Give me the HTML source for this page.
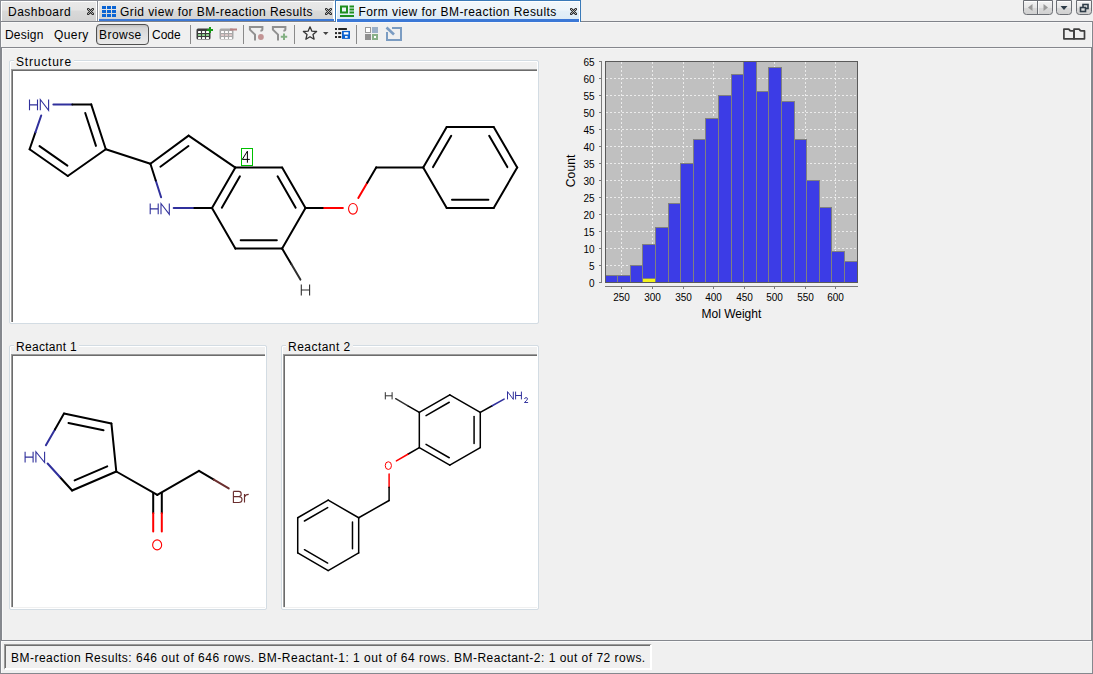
<!DOCTYPE html>
<html><head><meta charset="utf-8">
<style>
*{box-sizing:border-box;margin:0;padding:0}
html,body{width:1093px;height:674px;overflow:hidden;background:#f0f0f0;font-family:"Liberation Sans",sans-serif;font-size:12px;color:#000}
.abs{position:absolute}
.tab{position:absolute;top:0;height:21px;border:1px solid #8a8d95;border-bottom:none;box-shadow:inset 1px 0 0 #fff, inset -1px 0 0 #fff;background:linear-gradient(#ffffff 0,#ffffff 1px,#e9e9e9 1px,#e5e5e5 9px,#d9d9d9 10px,#d3d3d3 19px);}
.tab .t{position:absolute;top:4px;white-space:nowrap;line-height:14px}
.tab .ul{position:absolute;left:1px;right:0;top:18px;height:2px;background:#3b78d6}
.x{position:absolute;top:7px;width:7px;height:7px}
.tb{position:absolute;top:29px;line-height:12px;white-space:nowrap}
.sep{position:absolute;top:25px;width:1px;height:19px;background:#8a8a8a}
.grp{position:absolute;border:1px solid #d3dce3;border-radius:2px;box-shadow:inset 0 0 0 1px #fff}
.gt{position:absolute;background:#f0f0f0;padding:0 2px;line-height:14px;white-space:nowrap}
.pnl{position:absolute;background:#fff;border-top:1px solid #9c9c9c;border-left:1px solid #9c9c9c;box-shadow:inset 1px 1px 0 #6c6c6c}
</style></head>
<body>
<!-- TAB BAR -->
<div class="abs" style="left:0;top:21px;width:1093px;height:1px;background:#80838a"></div>
<div class="tab" style="left:0;width:98px;">
  <div class="t" style="left:7px;letter-spacing:0.5px">Dashboard</div>
  <svg class="x" style="left:86px" viewBox="0 0 7 7"><path d="M1.2 1.2L5.8 5.8M5.8 1.2L1.2 5.8" stroke="#2a2a2a" stroke-width="2.5" stroke-linecap="round"/><path d="M1.2 1.2L5.8 5.8M5.8 1.2L1.2 5.8" stroke="#f0f0f0" stroke-width="0.8" stroke-linecap="round" stroke-dasharray="0.9,0.9"/></svg>
</div>
<div class="tab" style="left:97px;width:238px;border-right-color:#fff">
  <svg class="abs" style="left:4px;top:4px" width="14" height="12" viewBox="0 0 14 12"><g fill="#0a64d4"><rect x="0" y="1" width="4" height="3"/><rect x="5" y="1" width="4" height="3"/><rect x="10" y="1" width="4" height="3"/><rect x="0" y="5" width="4" height="3"/><rect x="5" y="5" width="4" height="3"/><rect x="10" y="5" width="4" height="3"/><rect x="0" y="9" width="4" height="3"/><rect x="5" y="9" width="4" height="3"/><rect x="10" y="9" width="4" height="3"/></g></svg>
  <div class="t" style="left:22px;letter-spacing:0.43px">Grid view for BM-reaction Results</div>
  <svg class="x" style="left:227px" viewBox="0 0 7 7"><path d="M1.2 1.2L5.8 5.8M5.8 1.2L1.2 5.8" stroke="#2a2a2a" stroke-width="2.5" stroke-linecap="round"/><path d="M1.2 1.2L5.8 5.8M5.8 1.2L1.2 5.8" stroke="#f0f0f0" stroke-width="0.8" stroke-linecap="round" stroke-dasharray="0.9,0.9"/></svg>
  <div class="ul"></div>
</div>
<div class="tab" style="left:335px;width:246px;height:22px;border-color:#3a7ab8;background:linear-gradient(#ffffff 0,#ffffff 1px,#f1f7fb 1px,#eef5fa 9px,#e3eff8 10px,#dcebf6 19px);">
  <svg class="abs" style="left:4px;top:4px" width="15" height="12" viewBox="0 0 15 12"><g fill="none" stroke="#1f8f1f" stroke-width="2"><rect x="1" y="1.5" width="6" height="6"/></g><g fill="#1f8f1f"><rect x="9.5" y="0.5" width="4.5" height="2"/><rect x="9.5" y="3.5" width="4.5" height="2"/><rect x="9.5" y="6.5" width="4.5" height="2"/><rect x="0" y="10" width="14" height="2"/></g></svg>
  <div class="t" style="left:22.5px;letter-spacing:0.43px">Form view for BM-reaction Results</div>
  <svg class="x" style="left:234px" viewBox="0 0 7 7"><path d="M1.2 1.2L5.8 5.8M5.8 1.2L1.2 5.8" stroke="#2a2a2a" stroke-width="2.5" stroke-linecap="round"/><path d="M1.2 1.2L5.8 5.8M5.8 1.2L1.2 5.8" stroke="#f0f0f0" stroke-width="0.8" stroke-linecap="round" stroke-dasharray="0.9,0.9"/></svg>
  <div class="abs" style="left:1px;right:1px;top:18px;height:3px;background:#3b78d6"></div>
</div>
<!-- right tab controls -->
<svg class="abs" style="left:1020px;top:0" width="73" height="17" viewBox="0 0 73 17">
  <defs><linearGradient id="bg1" x1="0" y1="0" x2="0" y2="1"><stop offset="0" stop-color="#f4f4f4"/><stop offset="0.5" stop-color="#e6e6e6"/><stop offset="0.56" stop-color="#d8d8d8"/><stop offset="1" stop-color="#d0d0d0"/></linearGradient></defs>
  <path d="M3.5 0.5V11.5Q3.5 14.5 6.5 14.5H29.5Q32.5 14.5 32.5 11.5V0.5Z" fill="url(#bg1)" stroke="#6b6e74"/>
  <path d="M4.5 1.5H31.5" stroke="#fff"/>
  <line x1="17.5" y1="1" x2="17.5" y2="14" stroke="#6b6e74"/><line x1="18.5" y1="1.5" x2="18.5" y2="14" stroke="#fff" stroke-opacity="0.6"/>
  <path d="M8 7.5L12.5 4V11Z" fill="#9a9a9a"/><path d="M28 7.5L23.5 4V11Z" fill="#9a9a9a"/>
  <path d="M36.5 0.5V11.5Q36.5 14.5 39.5 14.5H48.5Q51.5 14.5 51.5 11.5V0.5Z" fill="url(#bg1)" stroke="#6b6e74"/>
  <path d="M37.5 1.5H50.5" stroke="#fff"/>
  <path d="M40.5 6H47.5L44 10Z" fill="#2e3c48"/>
  <path d="M56.5 0.5V11.5Q56.5 14.5 59.5 14.5H68.5Q71.5 14.5 71.5 11.5V0.5Z" fill="url(#bg1)" stroke="#6b6e74"/>
  <path d="M57.5 1.5H70.5" stroke="#fff"/>
  <rect x="63" y="4.5" width="5" height="4" fill="none" stroke="#2e3c48" stroke-width="1.6"/><rect x="60.5" y="7.5" width="5" height="4" fill="#e0e0e0" stroke="#2e3c48" stroke-width="1.6"/>
</svg>

<!-- TOOLBAR -->
<div class="abs" style="left:0;top:22px;width:1093px;height:1px;background:#f8f8f8"></div>
<div class="abs" style="left:0;top:47px;width:1093px;height:1px;background:#85878d"></div>
<div class="abs" style="left:2px;top:48px;width:1089px;height:1px;background:#f8f8f8"></div>
<div class="tb" style="left:5px;letter-spacing:0.2px">Design</div>
<div class="tb" style="left:54px;letter-spacing:0.4px">Query</div>
<div class="abs" style="left:96px;top:24px;width:53px;height:21px;border:1px solid #505050;border-radius:4px;background:linear-gradient(#c0c0c0,#d6d6d6 3px,#e0e0e0 10px,#eaeaea);box-shadow:inset 1px 0 0 #cfcfcf"></div>
<div class="tb" style="left:99px;letter-spacing:0.45px">Browse</div>
<div class="tb" style="left:152px">Code</div>
<div class="sep" style="left:190px"></div>
<svg class="abs" style="left:196px;top:26px" width="18" height="15" viewBox="0 0 18 15">
  <rect x="0.5" y="2.5" width="14" height="11" rx="1.5" fill="#3c3c3c"/>
  <g fill="#fff"><rect x="2" y="5" width="3" height="2" rx="0.5"/><rect x="6" y="5" width="3" height="2" rx="0.5"/><rect x="10" y="5" width="3" height="2" rx="0.5"/><rect x="2" y="11" width="3" height="2" rx="0.5"/><rect x="6" y="11" width="3" height="2" rx="0.5"/><rect x="10" y="11" width="3" height="2" rx="0.5"/></g>
  <g fill="#8fd08f"><rect x="2" y="8" width="3" height="2" rx="0.5"/><rect x="6" y="8" width="3" height="2" rx="0.5"/><rect x="10" y="8" width="3" height="2" rx="0.5"/></g>
  <path d="M14 1V7M11 4H17" stroke="#189a18" stroke-width="2"/>
</svg>
<svg class="abs" style="left:219px;top:26px" width="18" height="15" viewBox="0 0 18 15">
  <rect x="0.5" y="2.5" width="14" height="11" rx="1.5" fill="#a8a8a8"/>
  <g fill="#fff"><rect x="2" y="5" width="3" height="2" rx="0.5"/><rect x="6" y="5" width="3" height="2" rx="0.5"/><rect x="10" y="5" width="3" height="2" rx="0.5"/><rect x="2" y="11" width="3" height="2" rx="0.5"/><rect x="6" y="11" width="3" height="2" rx="0.5"/><rect x="10" y="11" width="3" height="2" rx="0.5"/></g>
  <g fill="#dcc8c8"><rect x="2" y="8" width="3" height="2" rx="0.5"/><rect x="6" y="8" width="3" height="2" rx="0.5"/><rect x="10" y="8" width="3" height="2" rx="0.5"/></g>
  <rect x="11" y="2.5" width="7" height="2" fill="#b88282"/>
</svg>
<div class="sep" style="left:243px"></div>
<svg class="abs" style="left:246px;top:24px" width="46" height="20" viewBox="246 24 46 20">
  <path d="M249.9 26V29.6L255 34.6V40.4M249 27H262.4V29.2Q262.4 30.6 260.4 30.8" fill="none" stroke="#909090" stroke-width="2"/>
  <circle cx="260.9" cy="37" r="2.9" fill="#c29494"/>
  <path d="M272.9 26V29.6L278 34.6V40.4M272 27H285.4V29.2Q285.4 30.6 283.4 30.8" fill="none" stroke="#909090" stroke-width="2"/>
  <path d="M284 33.6V40M280.8 36.8H287.2" stroke="#82b082" stroke-width="2"/>
</svg>
<div class="sep" style="left:294px"></div>
<svg class="abs" style="left:300.5px;top:25px" width="18" height="16" viewBox="0 0 18 16">
  <path d="M9 1.8L10.9 6.2L15.6 6.5L12 9.6L13.1 14.2L9 11.7L4.9 14.2L6 9.6L2.4 6.5L7.1 6.2Z" fill="none" stroke="#333" stroke-width="1.3" stroke-linejoin="round"/>
</svg>
<svg class="abs" style="left:320px;top:25px" width="10" height="16" viewBox="0 0 10 16"><path d="M3 7H8.5L5.75 10Z" fill="#444"/></svg>
<svg class="abs" style="left:334px;top:26px" width="17" height="14" viewBox="334 26 17 14">
  <g fill="#262626"><rect x="335" y="28" width="2" height="2"/><rect x="338.2" y="28" width="8.7" height="2"/><rect x="335" y="32.1" width="2" height="2"/><rect x="338.2" y="32.1" width="3" height="2"/><rect x="335" y="36" width="2" height="2"/><rect x="338.2" y="36" width="3" height="2"/></g>
  <rect x="342" y="30.9" width="8" height="8" fill="#0a62d0"/><rect x="343.8" y="32.2" width="4.6" height="2.3" fill="#fff"/><rect x="345" y="36.1" width="2.6" height="1.7" fill="#fff"/>
</svg>
<div class="sep" style="left:356px"></div>
<svg class="abs" style="left:364px;top:26px" width="15" height="15" viewBox="0 0 15 15">
  <rect x="1.5" y="1.5" width="5" height="5" fill="#fff" stroke="#999" stroke-width="1"/>
  <rect x="8" y="1" width="6" height="6" fill="#9cb0c8"/>
  <rect x="1" y="8" width="6" height="6" fill="#909090"/>
  <rect x="8" y="8" width="6" height="6" fill="#88b088"/><rect x="10" y="10" width="2" height="2" fill="#fff"/>
</svg>
<svg class="abs" style="left:385px;top:26px" width="18" height="16" viewBox="0 0 18 16">
  <path d="M7 2H16V14H2V6" fill="none" stroke="#7b9cc2" stroke-width="2"/>
  <path d="M1.5 1.5L9 8.5" stroke="#7b9cc2" stroke-width="2.6"/>
</svg>
<svg class="abs" style="left:1058px;top:24px" width="32" height="20" viewBox="1058 24 32 20">
  <path d="M1063.9 29.1H1068.4Q1069 29.1 1069.5 30Q1070 30.9 1071 30.9H1074V38.8H1063.9Z" fill="none" stroke="#3f3f3f" stroke-width="1.7" stroke-linejoin="round"/>
  <path d="M1074 29.1H1078.7Q1079.3 29.1 1079.8 30Q1080.3 30.9 1081.3 30.9H1084.5V38.8H1074Z" fill="none" stroke="#3f3f3f" stroke-width="1.7" stroke-linejoin="round"/>
</svg>

<!-- CONTENT FRAME -->
<div class="abs" style="left:0;top:21px;width:1px;height:653px;background:#85888e"></div>
<div class="abs" style="left:1px;top:22px;width:1px;height:25px;background:#f8f8f8"></div>
<div class="abs" style="left:1092px;top:21px;width:1px;height:653px;background:#85888e"></div>
<div class="abs" style="left:1091px;top:22px;width:1px;height:25px;background:#f8f8f8"></div>
<div class="abs" style="left:1px;top:48px;width:1px;height:592px;background:#85888e"></div>
<div class="abs" style="left:2px;top:48px;width:1px;height:592px;background:#f8f8f8"></div>
<div class="abs" style="left:1091px;top:48px;width:1px;height:592px;background:#85888e"></div>
<div class="abs" style="left:1090px;top:48px;width:1px;height:592px;background:#f8f8f8"></div>
<div class="abs" style="left:0;top:640px;width:1093px;height:1px;background:#85888e"></div>
<div class="abs" style="left:1px;top:641px;width:1091px;height:1px;background:#fafafa"></div>
<div class="abs" style="left:1px;top:641px;width:1px;height:32px;background:#fafafa"></div>
<div class="abs" style="left:0;top:673px;width:1093px;height:1px;background:#85888e"></div>

<!-- GROUPS -->
<div class="grp" style="left:9px;top:60px;width:530px;height:264px"></div>
<div class="gt" style="left:14px;top:55px;letter-spacing:0.8px">Structure</div>
<div class="pnl" style="left:11px;top:69px;width:526px;height:253px"></div>

<div class="grp" style="left:9px;top:345px;width:258px;height:265px"></div>
<div class="gt" style="left:14px;top:340px;letter-spacing:0.3px">Reactant 1</div>
<div class="pnl" style="left:11px;top:354px;width:254px;height:253px"></div>

<div class="grp" style="left:281px;top:345px;width:258px;height:265px"></div>
<div class="gt" style="left:286px;top:340px;letter-spacing:0.47px">Reactant 2</div>
<div class="pnl" style="left:283px;top:354px;width:254px;height:253px"></div>

<svg class="abs" style="left:0;top:0" width="1093" height="674" viewBox="0 0 1093 674">
<line x1="53.4" y1="104.4" x2="72.3" y2="104.4" stroke="#30309c" stroke-width="2" stroke-linecap="round"/><line x1="72.3" y1="104.4" x2="91.2" y2="104.4" stroke="#000" stroke-width="2" stroke-linecap="round"/>
<line x1="91.2" y1="104.4" x2="105.8" y2="149.3" stroke="#000" stroke-width="2" stroke-linecap="round"/>
<line x1="85.25" y1="112.96" x2="95.96" y2="145.88" stroke="#000" stroke-width="2" stroke-linecap="round"/>
<line x1="105.8" y1="149.3" x2="67.8" y2="176" stroke="#000" stroke-width="2" stroke-linecap="round"/>
<line x1="67.8" y1="176" x2="29.6" y2="149.3" stroke="#000" stroke-width="2" stroke-linecap="round"/>
<line x1="67.39" y1="165.59" x2="39.52" y2="146.11" stroke="#000" stroke-width="2" stroke-linecap="round"/>
<line x1="29.6" y1="149.3" x2="35.4" y2="132.4" stroke="#000" stroke-width="2" stroke-linecap="round"/><line x1="35.4" y1="132.4" x2="41.2" y2="115.5" stroke="#30309c" stroke-width="2" stroke-linecap="round"/>
<line x1="105.8" y1="149.3" x2="150.4" y2="163.8" stroke="#000" stroke-width="2" stroke-linecap="round"/>
<line x1="150.4" y1="163.8" x2="188.6" y2="135.6" stroke="#000" stroke-width="2" stroke-linecap="round"/>
<line x1="160.4" y1="166.74" x2="188.46" y2="146.02" stroke="#000" stroke-width="2" stroke-linecap="round"/>
<line x1="188.6" y1="135.6" x2="235.37" y2="167.6" stroke="#000" stroke-width="2" stroke-linecap="round"/>
<line x1="235.37" y1="167.6" x2="282.13" y2="167.6" stroke="#000" stroke-width="2" stroke-linecap="round"/>
<line x1="282.13" y1="167.6" x2="305.5" y2="208.1" stroke="#000" stroke-width="2" stroke-linecap="round"/>
<line x1="277.59" y1="176.34" x2="295.66" y2="207.66" stroke="#000" stroke-width="2" stroke-linecap="round"/>
<line x1="305.5" y1="208.1" x2="282.13" y2="248.6" stroke="#000" stroke-width="2" stroke-linecap="round"/>
<line x1="282.13" y1="248.6" x2="235.37" y2="248.6" stroke="#000" stroke-width="2" stroke-linecap="round"/>
<line x1="276.83" y1="240.3" x2="240.67" y2="240.3" stroke="#000" stroke-width="2" stroke-linecap="round"/>
<line x1="235.37" y1="248.6" x2="212" y2="208.1" stroke="#000" stroke-width="2" stroke-linecap="round"/>
<line x1="212" y1="208.1" x2="235.37" y2="167.6" stroke="#000" stroke-width="2" stroke-linecap="round"/>
<line x1="221.84" y1="207.66" x2="239.91" y2="176.34" stroke="#000" stroke-width="2" stroke-linecap="round"/>
<line x1="212" y1="208.1" x2="192.85" y2="208.1" stroke="#000" stroke-width="2" stroke-linecap="round"/><line x1="192.85" y1="208.1" x2="173.7" y2="208.1" stroke="#30309c" stroke-width="2" stroke-linecap="round"/>
<line x1="161.1" y1="197.2" x2="155.75" y2="180.5" stroke="#30309c" stroke-width="2" stroke-linecap="round"/><line x1="155.75" y1="180.5" x2="150.4" y2="163.8" stroke="#000" stroke-width="2" stroke-linecap="round"/>
<line x1="305.5" y1="208.1" x2="324.2" y2="208.1" stroke="#000" stroke-width="2" stroke-linecap="round"/><line x1="324.2" y1="208.1" x2="342.9" y2="208.1" stroke="#ff0000" stroke-width="2" stroke-linecap="round"/>
<line x1="358.3" y1="197.9" x2="367.25" y2="182.65" stroke="#ff0000" stroke-width="2" stroke-linecap="round"/><line x1="367.25" y1="182.65" x2="376.2" y2="167.4" stroke="#000" stroke-width="2" stroke-linecap="round"/>
<line x1="376.2" y1="167.4" x2="423.2" y2="167.5" stroke="#000" stroke-width="2" stroke-linecap="round"/>
<line x1="423.2" y1="167.5" x2="446.7" y2="127" stroke="#000" stroke-width="2" stroke-linecap="round"/>
<line x1="433.04" y1="167.08" x2="451.22" y2="135.75" stroke="#000" stroke-width="2" stroke-linecap="round"/>
<line x1="446.7" y1="127" x2="493.7" y2="127" stroke="#000" stroke-width="2" stroke-linecap="round"/>
<line x1="493.7" y1="127" x2="517.2" y2="167.5" stroke="#000" stroke-width="2" stroke-linecap="round"/>
<line x1="489.18" y1="135.75" x2="507.36" y2="167.08" stroke="#000" stroke-width="2" stroke-linecap="round"/>
<line x1="517.2" y1="167.5" x2="493.7" y2="208" stroke="#000" stroke-width="2" stroke-linecap="round"/>
<line x1="493.7" y1="208" x2="446.7" y2="208" stroke="#000" stroke-width="2" stroke-linecap="round"/>
<line x1="488.4" y1="199.7" x2="452" y2="199.7" stroke="#000" stroke-width="2" stroke-linecap="round"/>
<line x1="446.7" y1="208" x2="423.2" y2="167.5" stroke="#000" stroke-width="2" stroke-linecap="round"/>
<line x1="282.13" y1="248.6" x2="291.26" y2="264.1" stroke="#000" stroke-width="2" stroke-linecap="round"/><line x1="291.26" y1="264.1" x2="300.4" y2="279.6" stroke="#2e2e2e" stroke-width="2" stroke-linecap="round"/>
<path d="M29.5 99.5V110.3M37.5 99.5V110.3M29.5 104.9H37.5" stroke="#30309c" stroke-width="1.1" fill="none"/>
<path d="M40.3 110.3V99.5L48.6 110.3V99.5" stroke="#30309c" stroke-width="1.1" fill="none" stroke-linejoin="miter"/>
<path d="M150.2 203.5V214.3M158.2 203.5V214.3M150.2 208.9H158.2" stroke="#30309c" stroke-width="1.1" fill="none"/>
<path d="M161 214.3V203.5L169.3 214.3V203.5" stroke="#30309c" stroke-width="1.1" fill="none" stroke-linejoin="miter"/>
<ellipse cx="352.95" cy="208.8" rx="4.4" ry="5.35" stroke="#ff0000" stroke-width="1.1" fill="none"/>
<path d="M301.3 284.5V295.4M309.6 284.5V295.4M301.3 289.95H309.6" stroke="#2e2e2e" stroke-width="1.1" fill="none"/>
<rect x="241.5" y="148.5" width="11" height="17" fill="none" stroke="#00c000" stroke-width="1"/>
<path d="M247.4 162.7V151.2L242.3 159.4H249.8" stroke="#000" stroke-width="1" fill="none"/>
<line x1="45.9" y1="445.2" x2="54.95" y2="429.4" stroke="#30309c" stroke-width="2" stroke-linecap="round"/><line x1="54.95" y1="429.4" x2="64" y2="413.6" stroke="#000" stroke-width="2" stroke-linecap="round"/>
<line x1="64" y1="413.6" x2="111.4" y2="423.4" stroke="#000" stroke-width="2" stroke-linecap="round"/>
<line x1="68.49" y1="423" x2="103.55" y2="430.25" stroke="#000" stroke-width="2" stroke-linecap="round"/>
<line x1="111.4" y1="423.4" x2="116.3" y2="471.5" stroke="#000" stroke-width="2" stroke-linecap="round"/>
<line x1="116.3" y1="471.5" x2="72.1" y2="490.5" stroke="#000" stroke-width="2" stroke-linecap="round"/>
<line x1="107.23" y1="466.36" x2="74.61" y2="480.39" stroke="#000" stroke-width="2" stroke-linecap="round"/>
<line x1="72.1" y1="490.5" x2="59.85" y2="477" stroke="#000" stroke-width="2" stroke-linecap="round"/><line x1="59.85" y1="477" x2="47.6" y2="463.5" stroke="#30309c" stroke-width="2" stroke-linecap="round"/>
<line x1="116.3" y1="471.5" x2="157.3" y2="494.9" stroke="#000" stroke-width="2" stroke-linecap="round"/>
<line x1="157.3" y1="494.9" x2="199" y2="470.9" stroke="#000" stroke-width="2" stroke-linecap="round"/>
<line x1="199" y1="470.9" x2="213.85" y2="479.65" stroke="#000" stroke-width="2" stroke-linecap="round"/><line x1="213.85" y1="479.65" x2="228.7" y2="488.4" stroke="#6a2e2e" stroke-width="2" stroke-linecap="round"/>
<line x1="153.2" y1="493.2" x2="153.2" y2="513.2" stroke="#000" stroke-width="2" stroke-linecap="round"/><line x1="153.2" y1="513.2" x2="153.2" y2="531.6" stroke="#ff0000" stroke-width="2" stroke-linecap="round"/>
<line x1="161.8" y1="493.2" x2="161.8" y2="513.2" stroke="#000" stroke-width="2" stroke-linecap="round"/><line x1="161.8" y1="513.2" x2="161.8" y2="531.6" stroke="#ff0000" stroke-width="2" stroke-linecap="round"/>
<ellipse cx="157.15" cy="544.9" rx="4.5" ry="5" stroke="#ff0000" stroke-width="1.1" fill="none"/>
<path d="M25.1 451.7V462.5M33.1 451.7V462.5M25.1 457.1H33.1" stroke="#30309c" stroke-width="1.1" fill="none"/>
<path d="M35.9 462.5V451.7L44.6 462.5V451.7" stroke="#30309c" stroke-width="1.1" fill="none" stroke-linejoin="miter"/>
<path d="M233.4 491.4H238.8Q241.2 491.4 241.2 494Q241.2 496.6 238.8 496.6H233.4M238.8 496.6Q242 496.6 242 499.55Q242 502.5 238.8 502.5H233.4V491.4M244.5 494V502.6M244.5 497.2Q245.4 494.3 248.7 494.3" stroke="#6a2e2e" stroke-width="1.15" fill="none"/>
<line x1="419.32" y1="412.4" x2="449.8" y2="394.8" stroke="#000" stroke-width="1.5" stroke-linecap="round"/>
<line x1="426.05" y1="415.67" x2="449.26" y2="402.27" stroke="#000" stroke-width="1.5" stroke-linecap="round"/>
<line x1="449.8" y1="394.8" x2="480.28" y2="412.4" stroke="#000" stroke-width="1.5" stroke-linecap="round"/>
<line x1="480.28" y1="412.4" x2="480.28" y2="447.6" stroke="#000" stroke-width="1.5" stroke-linecap="round"/>
<line x1="474.08" y1="416.6" x2="474.08" y2="443.4" stroke="#000" stroke-width="1.5" stroke-linecap="round"/>
<line x1="480.28" y1="447.6" x2="449.8" y2="465.2" stroke="#000" stroke-width="1.5" stroke-linecap="round"/>
<line x1="449.8" y1="465.2" x2="419.32" y2="447.6" stroke="#000" stroke-width="1.5" stroke-linecap="round"/>
<line x1="449.26" y1="457.73" x2="426.05" y2="444.33" stroke="#000" stroke-width="1.5" stroke-linecap="round"/>
<line x1="419.32" y1="447.6" x2="419.32" y2="412.4" stroke="#000" stroke-width="1.5" stroke-linecap="round"/>
<line x1="297.72" y1="517.75" x2="328.2" y2="500.15" stroke="#000" stroke-width="1.5" stroke-linecap="round"/>
<line x1="304.45" y1="521.02" x2="327.66" y2="507.62" stroke="#000" stroke-width="1.5" stroke-linecap="round"/>
<line x1="328.2" y1="500.15" x2="358.68" y2="517.75" stroke="#000" stroke-width="1.5" stroke-linecap="round"/>
<line x1="358.68" y1="517.75" x2="358.68" y2="552.95" stroke="#000" stroke-width="1.5" stroke-linecap="round"/>
<line x1="352.48" y1="521.95" x2="352.48" y2="548.75" stroke="#000" stroke-width="1.5" stroke-linecap="round"/>
<line x1="358.68" y1="552.95" x2="328.2" y2="570.55" stroke="#000" stroke-width="1.5" stroke-linecap="round"/>
<line x1="328.2" y1="570.55" x2="297.72" y2="552.95" stroke="#000" stroke-width="1.5" stroke-linecap="round"/>
<line x1="327.66" y1="563.08" x2="304.45" y2="549.68" stroke="#000" stroke-width="1.5" stroke-linecap="round"/>
<line x1="297.72" y1="552.95" x2="297.72" y2="517.75" stroke="#000" stroke-width="1.5" stroke-linecap="round"/>
<line x1="419.32" y1="412.4" x2="407.51" y2="405.55" stroke="#000" stroke-width="1.5" stroke-linecap="round"/><line x1="407.51" y1="405.55" x2="395.7" y2="398.7" stroke="#2e2e2e" stroke-width="1.5" stroke-linecap="round"/>
<line x1="480.28" y1="412.4" x2="492.19" y2="405.75" stroke="#000" stroke-width="1.5" stroke-linecap="round"/><line x1="492.19" y1="405.75" x2="504.1" y2="399.1" stroke="#30309c" stroke-width="1.5" stroke-linecap="round"/>
<line x1="419.32" y1="447.6" x2="407.86" y2="454.25" stroke="#000" stroke-width="1.5" stroke-linecap="round"/><line x1="407.86" y1="454.25" x2="396.4" y2="460.9" stroke="#ff0000" stroke-width="1.5" stroke-linecap="round"/>
<line x1="389.1" y1="474.1" x2="389.1" y2="487.3" stroke="#ff0000" stroke-width="1.5" stroke-linecap="round"/><line x1="389.1" y1="487.3" x2="389.1" y2="500.5" stroke="#000" stroke-width="1.5" stroke-linecap="round"/>
<line x1="389.1" y1="500.5" x2="358.68" y2="517.75" stroke="#000" stroke-width="1.5" stroke-linecap="round"/>
<path d="M385.3 392.2V399.4M392.1 392.2V399.4M385.3 395.8H392.1" stroke="#2e2e2e" stroke-width="1" fill="none"/>
<path d="M507.5 399.4V391.6L513.3 399.4V391.6" stroke="#30309c" stroke-width="1" fill="none" stroke-linejoin="miter"/>
<path d="M515.6 391.6V399.4M521.4 391.6V399.4M515.6 395.5H521.4" stroke="#30309c" stroke-width="1" fill="none"/>
<path d="M524.5 399Q524.8 397.6 526.1 397.6Q527.5 397.6 527.5 398.9Q527.5 400 524.4 402.5H528.1" stroke="#30309c" stroke-width="0.95" fill="none"/>
<ellipse cx="388.35" cy="465.6" rx="3.1" ry="3.85" stroke="#ff0000" stroke-width="1" fill="none"/>
<rect x="605" y="61" width="253" height="222" fill="#c0c0c0"/>
<line x1="621.5" y1="62" x2="621.5" y2="282" stroke="#ebebeb" stroke-width="1" stroke-dasharray="2,2"/>
<line x1="652.5" y1="62" x2="652.5" y2="282" stroke="#ebebeb" stroke-width="1" stroke-dasharray="2,2"/>
<line x1="683.5" y1="62" x2="683.5" y2="282" stroke="#ebebeb" stroke-width="1" stroke-dasharray="2,2"/>
<line x1="713.5" y1="62" x2="713.5" y2="282" stroke="#ebebeb" stroke-width="1" stroke-dasharray="2,2"/>
<line x1="744.5" y1="62" x2="744.5" y2="282" stroke="#ebebeb" stroke-width="1" stroke-dasharray="2,2"/>
<line x1="774.5" y1="62" x2="774.5" y2="282" stroke="#ebebeb" stroke-width="1" stroke-dasharray="2,2"/>
<line x1="805.5" y1="62" x2="805.5" y2="282" stroke="#ebebeb" stroke-width="1" stroke-dasharray="2,2"/>
<line x1="835.5" y1="62" x2="835.5" y2="282" stroke="#ebebeb" stroke-width="1" stroke-dasharray="2,2"/>
<line x1="606" y1="265.5" x2="857" y2="265.5" stroke="#ebebeb" stroke-width="1" stroke-dasharray="2,2"/>
<line x1="606" y1="248.5" x2="857" y2="248.5" stroke="#ebebeb" stroke-width="1" stroke-dasharray="2,2"/>
<line x1="606" y1="231.5" x2="857" y2="231.5" stroke="#ebebeb" stroke-width="1" stroke-dasharray="2,2"/>
<line x1="606" y1="214.5" x2="857" y2="214.5" stroke="#ebebeb" stroke-width="1" stroke-dasharray="2,2"/>
<line x1="606" y1="197.5" x2="857" y2="197.5" stroke="#ebebeb" stroke-width="1" stroke-dasharray="2,2"/>
<line x1="606" y1="180.5" x2="857" y2="180.5" stroke="#ebebeb" stroke-width="1" stroke-dasharray="2,2"/>
<line x1="606" y1="163.5" x2="857" y2="163.5" stroke="#ebebeb" stroke-width="1" stroke-dasharray="2,2"/>
<line x1="606" y1="146.5" x2="857" y2="146.5" stroke="#ebebeb" stroke-width="1" stroke-dasharray="2,2"/>
<line x1="606" y1="129.5" x2="857" y2="129.5" stroke="#ebebeb" stroke-width="1" stroke-dasharray="2,2"/>
<line x1="606" y1="112.5" x2="857" y2="112.5" stroke="#ebebeb" stroke-width="1" stroke-dasharray="2,2"/>
<line x1="606" y1="95.5" x2="857" y2="95.5" stroke="#ebebeb" stroke-width="1" stroke-dasharray="2,2"/>
<line x1="606" y1="78.5" x2="857" y2="78.5" stroke="#ebebeb" stroke-width="1" stroke-dasharray="2,2"/>
<rect x="605.5" y="275.5" width="12.0" height="7.0" fill="#3c3ce6" stroke="#808080" stroke-width="1"/>
<rect x="617.5" y="275.5" width="13.0" height="7.0" fill="#3c3ce6" stroke="#808080" stroke-width="1"/>
<rect x="630.5" y="265.5" width="12.0" height="17.0" fill="#3c3ce6" stroke="#808080" stroke-width="1"/>
<rect x="642.5" y="244.5" width="13.0" height="38.0" fill="#3c3ce6" stroke="#808080" stroke-width="1"/>
<rect x="655.5" y="227.5" width="13.0" height="55.0" fill="#3c3ce6" stroke="#808080" stroke-width="1"/>
<rect x="668.5" y="203.5" width="12.0" height="79.0" fill="#3c3ce6" stroke="#808080" stroke-width="1"/>
<rect x="680.5" y="163.5" width="13.0" height="119.0" fill="#3c3ce6" stroke="#808080" stroke-width="1"/>
<rect x="693.5" y="139.5" width="12.0" height="143.0" fill="#3c3ce6" stroke="#808080" stroke-width="1"/>
<rect x="705.5" y="118.5" width="13.0" height="164.0" fill="#3c3ce6" stroke="#808080" stroke-width="1"/>
<rect x="718.5" y="95.5" width="13.0" height="187.0" fill="#3c3ce6" stroke="#808080" stroke-width="1"/>
<rect x="731.5" y="74.5" width="12.0" height="208.0" fill="#3c3ce6" stroke="#808080" stroke-width="1"/>
<rect x="743.5" y="61.5" width="13.0" height="221.0" fill="#3c3ce6" stroke="#808080" stroke-width="1"/>
<rect x="756.5" y="91.5" width="12.0" height="191.0" fill="#3c3ce6" stroke="#808080" stroke-width="1"/>
<rect x="768.5" y="67.5" width="13.0" height="215.0" fill="#3c3ce6" stroke="#808080" stroke-width="1"/>
<rect x="781.5" y="101.5" width="13.0" height="181.0" fill="#3c3ce6" stroke="#808080" stroke-width="1"/>
<rect x="794.5" y="139.5" width="12.0" height="143.0" fill="#3c3ce6" stroke="#808080" stroke-width="1"/>
<rect x="806.5" y="180.5" width="13.0" height="102.0" fill="#3c3ce6" stroke="#808080" stroke-width="1"/>
<rect x="819.5" y="207.5" width="12.0" height="75.0" fill="#3c3ce6" stroke="#808080" stroke-width="1"/>
<rect x="831.5" y="251.5" width="13.0" height="31.0" fill="#3c3ce6" stroke="#808080" stroke-width="1"/>
<rect x="844.5" y="261.5" width="13.0" height="21.0" fill="#3c3ce6" stroke="#808080" stroke-width="1"/>
<rect x="642.5" y="278.5" width="13" height="4.0" fill="#f2f21c" stroke="#808080" stroke-width="1"/>
<rect x="605.5" y="61.5" width="252" height="221" fill="none" stroke="#5a5a5a" stroke-width="1"/>
<line x1="601.5" y1="61" x2="601.5" y2="283" stroke="#7a7a7a" stroke-width="1"/>
<line x1="599" y1="282.5" x2="601.5" y2="282.5" stroke="#7a7a7a" stroke-width="1"/>
<text x="594.5" y="286.8" text-anchor="end" font-size="10" fill="#000" font-family="Liberation Sans">0</text>
<line x1="599" y1="265.5" x2="601.5" y2="265.5" stroke="#7a7a7a" stroke-width="1"/>
<text x="594.5" y="269.8" text-anchor="end" font-size="10" fill="#000" font-family="Liberation Sans">5</text>
<line x1="599" y1="248.5" x2="601.5" y2="248.5" stroke="#7a7a7a" stroke-width="1"/>
<text x="594.5" y="252.8" text-anchor="end" font-size="10" fill="#000" font-family="Liberation Sans">10</text>
<line x1="599" y1="231.5" x2="601.5" y2="231.5" stroke="#7a7a7a" stroke-width="1"/>
<text x="594.5" y="235.8" text-anchor="end" font-size="10" fill="#000" font-family="Liberation Sans">15</text>
<line x1="599" y1="214.5" x2="601.5" y2="214.5" stroke="#7a7a7a" stroke-width="1"/>
<text x="594.5" y="218.8" text-anchor="end" font-size="10" fill="#000" font-family="Liberation Sans">20</text>
<line x1="599" y1="197.5" x2="601.5" y2="197.5" stroke="#7a7a7a" stroke-width="1"/>
<text x="594.5" y="201.8" text-anchor="end" font-size="10" fill="#000" font-family="Liberation Sans">25</text>
<line x1="599" y1="180.5" x2="601.5" y2="180.5" stroke="#7a7a7a" stroke-width="1"/>
<text x="594.5" y="184.8" text-anchor="end" font-size="10" fill="#000" font-family="Liberation Sans">30</text>
<line x1="599" y1="163.5" x2="601.5" y2="163.5" stroke="#7a7a7a" stroke-width="1"/>
<text x="594.5" y="167.8" text-anchor="end" font-size="10" fill="#000" font-family="Liberation Sans">35</text>
<line x1="599" y1="146.5" x2="601.5" y2="146.5" stroke="#7a7a7a" stroke-width="1"/>
<text x="594.5" y="150.8" text-anchor="end" font-size="10" fill="#000" font-family="Liberation Sans">40</text>
<line x1="599" y1="129.5" x2="601.5" y2="129.5" stroke="#7a7a7a" stroke-width="1"/>
<text x="594.5" y="133.8" text-anchor="end" font-size="10" fill="#000" font-family="Liberation Sans">45</text>
<line x1="599" y1="112.5" x2="601.5" y2="112.5" stroke="#7a7a7a" stroke-width="1"/>
<text x="594.5" y="116.8" text-anchor="end" font-size="10" fill="#000" font-family="Liberation Sans">50</text>
<line x1="599" y1="95.5" x2="601.5" y2="95.5" stroke="#7a7a7a" stroke-width="1"/>
<text x="594.5" y="99.8" text-anchor="end" font-size="10" fill="#000" font-family="Liberation Sans">55</text>
<line x1="599" y1="78.5" x2="601.5" y2="78.5" stroke="#7a7a7a" stroke-width="1"/>
<text x="594.5" y="82.8" text-anchor="end" font-size="10" fill="#000" font-family="Liberation Sans">60</text>
<line x1="599" y1="61.5" x2="601.5" y2="61.5" stroke="#7a7a7a" stroke-width="1"/>
<text x="594.5" y="65.8" text-anchor="end" font-size="10" fill="#000" font-family="Liberation Sans">65</text>
<line x1="605" y1="286.5" x2="858" y2="286.5" stroke="#7a7a7a" stroke-width="1"/>
<line x1="621.5" y1="286.5" x2="621.5" y2="289" stroke="#7a7a7a" stroke-width="1"/>
<text x="621.5" y="301" text-anchor="middle" font-size="10" fill="#000" font-family="Liberation Sans">250</text>
<line x1="652.5" y1="286.5" x2="652.5" y2="289" stroke="#7a7a7a" stroke-width="1"/>
<text x="652.5" y="301" text-anchor="middle" font-size="10" fill="#000" font-family="Liberation Sans">300</text>
<line x1="683.5" y1="286.5" x2="683.5" y2="289" stroke="#7a7a7a" stroke-width="1"/>
<text x="683.5" y="301" text-anchor="middle" font-size="10" fill="#000" font-family="Liberation Sans">350</text>
<line x1="713.5" y1="286.5" x2="713.5" y2="289" stroke="#7a7a7a" stroke-width="1"/>
<text x="713.5" y="301" text-anchor="middle" font-size="10" fill="#000" font-family="Liberation Sans">400</text>
<line x1="744.5" y1="286.5" x2="744.5" y2="289" stroke="#7a7a7a" stroke-width="1"/>
<text x="744.5" y="301" text-anchor="middle" font-size="10" fill="#000" font-family="Liberation Sans">450</text>
<line x1="774.5" y1="286.5" x2="774.5" y2="289" stroke="#7a7a7a" stroke-width="1"/>
<text x="774.5" y="301" text-anchor="middle" font-size="10" fill="#000" font-family="Liberation Sans">500</text>
<line x1="805.5" y1="286.5" x2="805.5" y2="289" stroke="#7a7a7a" stroke-width="1"/>
<text x="805.5" y="301" text-anchor="middle" font-size="10" fill="#000" font-family="Liberation Sans">550</text>
<line x1="835.5" y1="286.5" x2="835.5" y2="289" stroke="#7a7a7a" stroke-width="1"/>
<text x="835.5" y="301" text-anchor="middle" font-size="10" fill="#000" font-family="Liberation Sans">600</text>
<text x="701.5" y="318.2" font-size="12" fill="#000" font-family="Liberation Sans">Mol Weight</text>
<text transform="translate(575,187.2) rotate(-90)" font-size="12" fill="#000" font-family="Liberation Sans" letter-spacing="0.15">Count</text>
</svg>

<!-- STATUS -->
<div class="abs" style="left:4px;top:644px;width:648px;height:26px;border-top:1px solid #9a9a9a;border-left:1px solid #9a9a9a;border-right:2px solid #fff;border-bottom:2px solid #fff;box-shadow:inset 1px 1px 0 #6e6e6e"></div>
<div class="abs" style="left:11px;top:652px;line-height:13px;white-space:nowrap;letter-spacing:0.49px">BM-reaction Results: 646 out of 646 rows. BM-Reactant-1: 1 out of 64 rows. BM-Reactant-2: 1 out of 72 rows.</div>
</body></html>
